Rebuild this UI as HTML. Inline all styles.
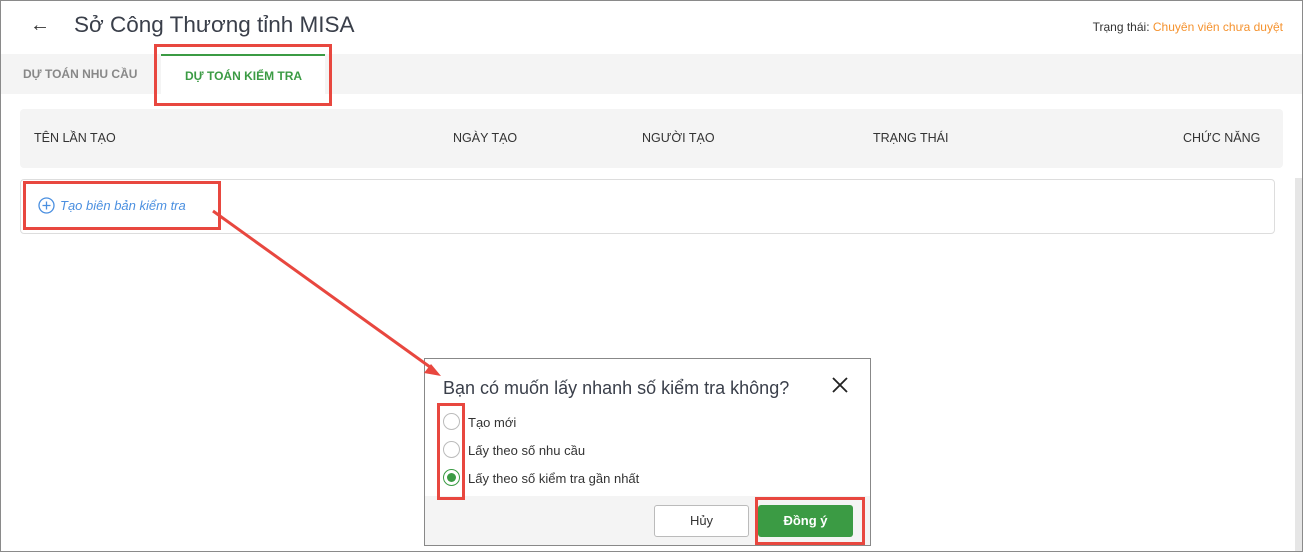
<!DOCTYPE html><html><head><meta charset="utf-8"><style>
*{margin:0;padding:0;box-sizing:border-box}
body{width:1303px;height:552px;position:relative;overflow:hidden;background:#fff;font-family:"Liberation Sans",sans-serif;color:#333}
.a{position:absolute}
.rb{position:absolute;border:3px solid #e8473f}
</style></head><body>
<div class="a" style="left:0;top:0;width:1303px;height:552px;border:1px solid #8a8a8a;z-index:9;pointer-events:none"></div>
<div class="a" style="left:30px;top:14px;font-size:20px;color:#333">←</div>
<div class="a" style="left:74px;top:12px;font-size:22.5px;color:#3a3f4a;font-weight:500">Sở Công Thương tỉnh MISA</div>
<div class="a" style="right:20px;top:20px;font-size:12px;color:#333">Trạng thái: <span style="color:#f5922e">Chuyên viên chưa duyệt</span></div>
<div class="a" style="left:1px;top:54px;width:1301px;height:40px;background:#f4f4f4"></div>
<div class="a" style="left:23px;top:67px;font-size:12px;color:#888;font-weight:bold">DỰ TOÁN NHU CẦU</div>
<div class="a" style="left:161px;top:54px;width:164px;height:40px;background:#fff;border-top:2px solid #3b9b44"></div>
<div class="a" style="left:185px;top:69px;font-size:12px;color:#3b9b44;font-weight:bold">DỰ TOÁN KIỂM TRA</div>
<div class="a" style="left:20px;top:109px;width:1263px;height:59px;background:#f4f4f4;border-radius:4px"></div>
<div class="a" style="left:34px;top:131px;font-size:12.5px">TÊN LẦN TẠO</div>
<div class="a" style="left:453px;top:131px;font-size:12.5px">NGÀY TẠO</div>
<div class="a" style="left:642px;top:131px;font-size:12.5px">NGƯỜI TẠO</div>
<div class="a" style="left:873px;top:131px;font-size:12.5px">TRẠNG THÁI</div>
<div class="a" style="left:1183px;top:131px;font-size:12.5px">CHỨC NĂNG</div>
<div class="a" style="left:20px;top:179px;width:1255px;height:55px;border:1px solid #ddd;border-radius:4px"></div>
<div class="a" style="left:1295px;top:178px;width:7px;height:374px;background:#e6e6e6"></div>
<svg class="a" style="left:38px;top:197px" width="17" height="17"><circle cx="8.5" cy="8.5" r="7.5" fill="none" stroke="#4a8fe0" stroke-width="1.3"/><path d="M8.5 4.5v8M4.5 8.5h8" stroke="#4a8fe0" stroke-width="1.3"/></svg>
<div class="a" style="left:60px;top:198px;font-size:13px;font-style:italic;color:#4a8fe0">Tạo biên bản kiểm tra</div>
<div class="a" style="left:424px;top:358px;width:447px;height:188px;background:#fff;border:1px solid #888"></div>
<div class="a" style="left:425px;top:496px;width:445px;height:49px;background:#f4f4f4"></div>
<svg class="a" style="left:0;top:0;z-index:5" width="1303" height="552"><line x1="213" y1="211" x2="430" y2="367" stroke="#e8473f" stroke-width="3"/><path d="M441 376l-17-3 7-9z" fill="#e8473f"/></svg>
<div class="a" style="left:443px;top:378px;font-size:18px;color:#3a3f4a">Bạn có muốn lấy nhanh số kiểm tra không?</div>
<svg class="a" style="left:832px;top:377px" width="16" height="16"><path d="M1 1L15 15M15 1L1 15" stroke="#222" stroke-width="1.8"/></svg>
<div class="a" style="left:443px;top:413px;width:17px;height:17px;border:1px solid #bbb;border-radius:50%"></div>
<div class="a" style="left:443px;top:441px;width:17px;height:17px;border:1px solid #bbb;border-radius:50%"></div>
<div class="a" style="left:443px;top:469px;width:17px;height:17px;border:1px solid #3b9b44;border-radius:50%"></div>
<div class="a" style="left:447px;top:473px;width:9px;height:9px;background:#3b9b44;border-radius:50%"></div>
<div class="a" style="left:468px;top:415px;font-size:13px">Tạo mới</div>
<div class="a" style="left:468px;top:443px;font-size:13px">Lấy theo số nhu cầu</div>
<div class="a" style="left:468px;top:471px;font-size:13px">Lấy theo số kiểm tra gần nhất</div>
<div class="a" style="left:654px;top:505px;width:95px;height:32px;background:#fff;border:1px solid #bbb;border-radius:3px;font-size:13px;text-align:center;line-height:30px">Hủy</div>
<div class="a" style="left:758px;top:505px;width:95px;height:32px;background:#3b9b44;border-radius:3px;font-size:13px;text-align:center;line-height:32px;color:#fff;font-weight:bold">Đồng ý</div>
<div class="rb" style="left:154px;top:44px;width:178px;height:62px"></div>
<div class="rb" style="left:23px;top:181px;width:198px;height:49px"></div>
<div class="rb" style="left:437px;top:403px;width:28px;height:97px"></div>
<div class="rb" style="left:755px;top:497px;width:110px;height:48px"></div>
</body></html>
